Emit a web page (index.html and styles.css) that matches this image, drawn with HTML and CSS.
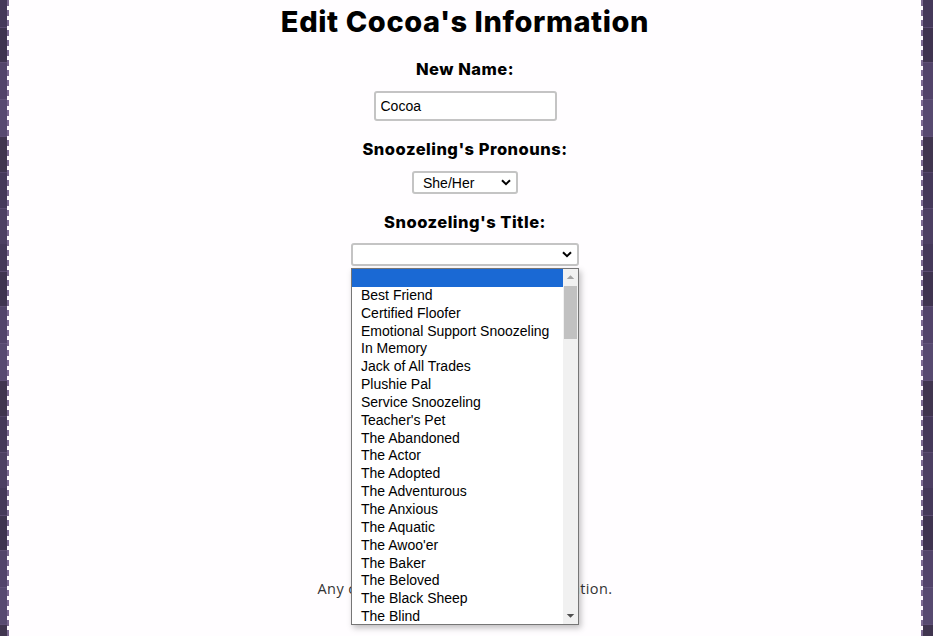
FILE: index.html
```html
<!DOCTYPE html>
<html lang="en">
<head>
<meta charset="utf-8">
<title>Edit Cocoa's Information</title>
<link rel="stylesheet" href="styles.css">
</head>
<body>
<div class="panel">
  <h1 class="title">Edit Cocoa's Information</h1>
  <form class="form">
    <label class="label" for="name">New Name:</label>
    <input class="text-input" id="name" type="text" value="Cocoa">

    <label class="label" for="pronouns">Snoozeling's Pronouns:</label>
    <div class="select-wrap select-pronouns">
      <select class="select" id="pronouns"><option>She/Her</option></select>
      <svg class="chev" width="10" height="7" viewBox="0 0 10 7"><path d="M1 1.2 L5 5.2 L9 1.2" fill="none" stroke="#000" stroke-width="2"/></svg>
    </div>

    <label class="label" for="title">Snoozeling's Title:</label>
    <div class="select-wrap select-title">
      <select class="select" id="title"><option></option></select>
      <svg class="chev" width="10" height="7" viewBox="0 0 10 7"><path d="M1 1.2 L5 5.2 L9 1.2" fill="none" stroke="#000" stroke-width="2"/></svg>
      <div class="dropdown">
        <ul class="options">
          <li class="opt selected">&nbsp;</li>
          <li class="opt">Best Friend</li>
          <li class="opt">Certified Floofer</li>
          <li class="opt">Emotional Support Snoozeling</li>
          <li class="opt">In Memory</li>
          <li class="opt">Jack of All Trades</li>
          <li class="opt">Plushie Pal</li>
          <li class="opt">Service Snoozeling</li>
          <li class="opt">Teacher's Pet</li>
          <li class="opt">The Abandoned</li>
          <li class="opt">The Actor</li>
          <li class="opt">The Adopted</li>
          <li class="opt">The Adventurous</li>
          <li class="opt">The Anxious</li>
          <li class="opt">The Aquatic</li>
          <li class="opt">The Awoo'er</li>
          <li class="opt">The Baker</li>
          <li class="opt">The Beloved</li>
          <li class="opt">The Black Sheep</li>
          <li class="opt">The Blind</li>
        </ul>
        <div class="scrollbar">
          <svg class="arrow" width="16" height="17" viewBox="0 0 16 17"><path d="M4 10 L8 6 L12 10 Z" fill="#a3a3a3"/></svg>
          <div class="track"><div class="thumb"></div></div>
          <svg class="arrow" width="16" height="17" viewBox="0 0 16 17"><path d="M4 7 L8 11 L12 7 Z" fill="#505050"/></svg>
        </div>
      </div>
    </div>

    <p class="note">Any changes will update this information.</p>
  </form>
</div>
</body>
</html>
```

FILE: styles.css
```css
* { box-sizing: border-box; }

html, body { height: 100%; }

body {
  margin: 0;
  overflow: hidden;
  background-color: #463a5a;
  background-image: repeating-linear-gradient(180deg,
    #45395a 0px, #45395a 27px, #5a4b70 27px, #5a4b70 28px,
    #3f3450 28px, #3f3450 62px, #5e4f74 62px, #5e4f74 63px,
    #52446a 63px, #52446a 99px, #62547a 99px, #62547a 100px,
    #574a70 100px, #574a70 136px, #5e4f76 136px, #5e4f76 137px,
    #40354f 137px, #40354f 172px, #54466a 172px, #54466a 173px,
    #45395a 173px, #45395a 208px, #5a4b70 208px, #5a4b70 209px,
    #4c3f62 209px, #4c3f62 244px);
  font-family: "Open Sans", "Liberation Sans", sans-serif;
}

.panel {
  margin: 0 10px 0 7px;
  height: 100%;
  background: #fffdff;
  border-left: 2px dashed #7a6890;
  border-right: 2px dashed #7a6890;
  padding-top: 5px;
  text-align: center;
}

.title {
  margin: 0;
  font-family: Inter, "Liberation Sans", sans-serif;
  font-size: 29px;
  font-weight: 800;
  line-height: 34px;
  letter-spacing: 0.6px;
  color: #000;
}

.form {
  display: flex;
  flex-direction: column;
  align-items: center;
}

.label {
  display: block;
  margin-top: 17px;
  font-family: Inter, "Liberation Sans", sans-serif;
  font-weight: 800;
  font-size: 16.5px;
  line-height: 22px;
  letter-spacing: 0.5px;
  color: #000;
}

.form > .label:first-child { margin-top: 19px; }

.text-input {
  margin-top: 11px;
  width: 183px;
  height: 30px;
  border: 2px solid #c4c4c4;
  border-radius: 3px;
  padding: 0 5px;
  font-family: "Liberation Sans", Arial, sans-serif;
  font-size: 14px;
  color: #000;
  background: #fff;
}

.select-wrap {
  position: relative;
}

.select-pronouns { margin-top: 11px; }
.select-title { margin-top: 10px; }

.select {
  appearance: none;
  -webkit-appearance: none;
  display: block;
  height: 23px;
  border: 2px solid #c4c4c4;
  border-radius: 3px;
  background: #fff;
  padding: 0 9px;
  font-family: "Liberation Sans", Arial, sans-serif;
  font-size: 14px;
  color: #000;
  text-align: left;
}

.select-pronouns .select { width: 106px; }
.select-title .select { width: 228px; }

.chev {
  position: absolute;
  top: 8px;
  right: 7px;
}

.dropdown {
  position: absolute;
  left: 0;
  top: 25px;
  width: 228px;
  height: 357px;
  border: 1px solid #767676;
  background: #fff;
  box-shadow: 2px 3px 6px rgba(0, 0, 0, 0.25);
  display: flex;
  z-index: 10;
  text-align: left;
}

.options {
  list-style: none;
  margin: 0;
  padding: 0;
  flex: 1;
  overflow: hidden;
}

.opt {
  height: 17.85px;
  line-height: 17.85px;
  padding-left: 9px;
  font-family: "Liberation Sans", Arial, sans-serif;
  font-size: 14px;
  color: #000;
  white-space: nowrap;
}

.opt.selected { background: #1a69d4; color: #fff; }

.scrollbar {
  width: 15px;
  background: #f1f1f1;
  display: flex;
  flex-direction: column;
}

.arrow { display: block; width: 15px; height: 17px; flex: none; }

.track { flex: 1; padding: 0 1px; }

.thumb {
  width: 13px;
  height: 53px;
  background: #c1c1c1;
}

.note {
  margin: 313px 0 0;
  font-family: "Open Sans", "Liberation Sans", sans-serif;
  font-size: 14.5px;
  line-height: 20px;
  letter-spacing: 0.4px;
  color: #333;
}
```
